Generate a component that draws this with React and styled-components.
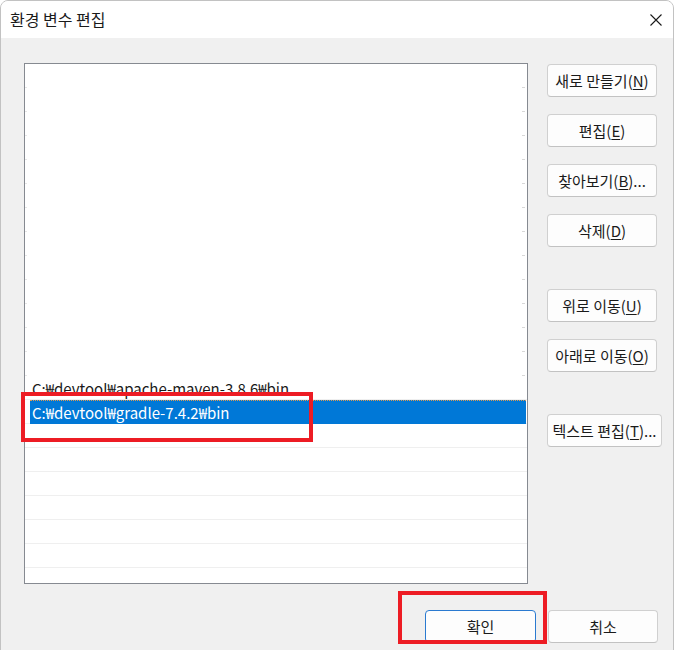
import React from 'react'
import styled, { createGlobalStyle } from 'styled-components'

const Global = createGlobalStyle`
  html, body {
    margin: 0;
    padding: 0;
    background: #ffffff;
  }
  body {
    width: 678px;
    height: 650px;
    overflow: hidden;
    font-family: 'Noto Sans CJK KR', 'Noto Sans', sans-serif;
  }
`

const Window = styled.div`
  position: relative;
  width: 674px;
  height: 660px;
  box-sizing: border-box;
  border: 1px solid #c2c2c2;
  border-radius: 8px 8px 0 0;
  background: #f0f0f0;
  overflow: hidden;
  display: flex;
  flex-direction: column;
`

const TitleBar = styled.div`
  height: 37px;
  flex-shrink: 0;
  background: #ffffff;
  display: flex;
  align-items: center;
  justify-content: space-between;
  padding: 0 11px 0 9px;
  font-size: 16px;
  color: #1a1a1a;
  line-height: 1;
`

const Title = styled.span`
  padding-bottom: 2px;
`

const Body = styled.div`
  display: flex;
  align-items: flex-start;
  gap: 19px;
  padding: 25px 0 0 23px;
`

const List = styled.div`
  width: 504px;
  height: 521px;
  box-sizing: border-box;
  border: 1px solid #868a91;
  background: #ffffff;
  overflow: hidden;
  display: flex;
  flex-direction: column;
`

const Row = styled.div`
  height: 24px;
  flex-shrink: 0;
  box-sizing: border-box;
  display: flex;
  align-items: stretch;
  padding-left: 5px;
  background: ${p => p.$faint
    ? 'linear-gradient(to right, #e6e6e6 0 2px, transparent 2px calc(100% - 5px), #d8d8d8 calc(100% - 5px) calc(100% - 2px), transparent calc(100% - 2px)) bottom / 100% 1px no-repeat'
    : 'linear-gradient(#efefef, #efefef) bottom / 100% 1px no-repeat'};
`

const Label = styled.div`
  flex: 1;
  display: flex;
  align-items: center;
  padding-left: 2px;
  font-size: 15px;
  line-height: 1;
  color: ${p => (p.$selected ? '#ffffff' : '#1a1a1a')};
  background: ${p => (p.$selected ? '#0078d7' : 'transparent')};
  border-top: 1px dotted ${p => (p.$selected ? '#e09a50' : 'transparent')};
  margin-right: 1px;
`

const Side = styled.div`
  display: flex;
  flex-direction: column;
  align-items: flex-start;
  padding-top: 1px;
`

const Button = styled.button`
  width: ${p => p.$w || 110}px;
  height: 33px;
  margin-top: ${p => p.$gap || 0}px;
  box-sizing: border-box;
  border: 1px solid ${p => (p.$primary ? '#2a7ad0' : '#d0d0d0')};
  border-bottom-color: ${p => (p.$primary ? '#2a7ad0' : '#c2c2c2')};
  border-radius: 4px;
  background: #fdfdfd;
  color: #1a1a1a;
  font-family: 'Noto Sans CJK KR', 'Noto Sans', sans-serif;
  font-size: 15px;
  line-height: 1;
  padding: 0;
  white-space: nowrap;
  display: flex;
  align-items: center;
  justify-content: center;

  u {
    text-decoration-thickness: 1px;
    text-underline-offset: 2px;
  }
`

const Footer = styled.div`
  display: flex;
  justify-content: flex-end;
  gap: 12px;
  padding: 26px 15px 0 0;
`

const Mark = styled.div`
  position: absolute;
  box-sizing: border-box;
  border: 4px solid #ed1c24;
  pointer-events: none;
`

const paths = [
  'C:\u20A9devtool\u20A9apache-maven-3.8.6\u20A9bin',
  'C:\u20A9devtool\u20A9gradle-7.4.2\u20A9bin',
]

export default function App() {
  const faint = Array.from({ length: 13 })
  const empty = Array.from({ length: 7 })

  return (
    <>
      <Global />
      <Window>
        <TitleBar>
          <Title>환경 변수 편집</Title>
          <svg width="12" height="12" viewBox="0 0 12 12">
            <path d="M0.5 0.5 L11.5 11.5 M11.5 0.5 L0.5 11.5" stroke="#1a1a1a" strokeWidth="1.1" fill="none" />
          </svg>
        </TitleBar>
        <Body>
          <List>
            {faint.map((_, i) => (
              <Row key={'f' + i} $faint>
                <Label />
              </Row>
            ))}
            <Row>
              <Label>{paths[0]}</Label>
            </Row>
            <Row>
              <Label $selected>{paths[1]}</Label>
            </Row>
            {empty.map((_, i) => (
              <Row key={'e' + i}>
                <Label />
              </Row>
            ))}
          </List>
          <Side>
            <Button>새로 만들기(<u>N</u>)</Button>
            <Button $gap={17}>편집(<u>E</u>)</Button>
            <Button $gap={17}>찾아보기(<u>B</u>)...</Button>
            <Button $gap={17}>삭제(<u>D</u>)</Button>
            <Button $gap={42}>위로 이동(<u>U</u>)</Button>
            <Button $gap={17}>아래로 이동(<u>O</u>)</Button>
            <Button $gap={42} $w={115}>텍스트 편집(<u>T</u>)...</Button>
          </Side>
        </Body>
        <Footer>
          <Button $primary $w={111}>확인</Button>
          <Button>취소</Button>
        </Footer>
        <Mark style={{ left: 20, top: 391, width: 292, height: 50 }} />
        <Mark style={{ left: 397, top: 590, width: 149, height: 53 }} />
      </Window>
    </>
  )
}
